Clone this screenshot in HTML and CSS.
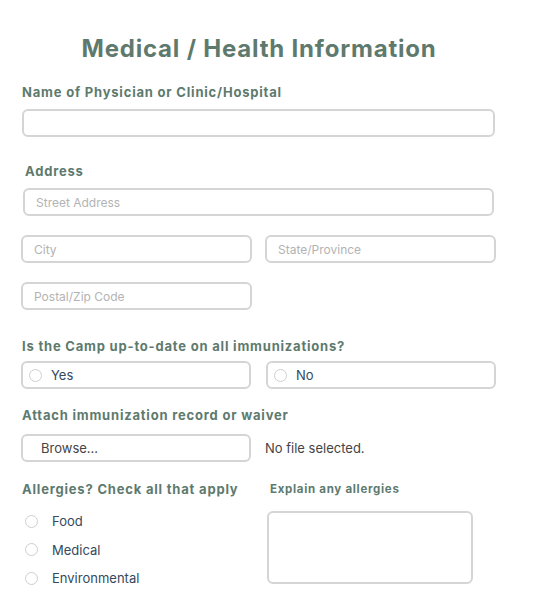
FILE: index.html
```html
<!DOCTYPE html>
<html lang="en">

<head>
    <meta charset="UTF-8">
    <meta name="viewport" content="width=device-width, initial-scale=1.0">
    <title>Medical / Health Information</title>
    <link rel="stylesheet" href="styles.css">
</head>

<body>
    <form class="health-form">
        <h1 class="form-title">Medical / Health Information</h1>

        <div class="form-group">
            <label class="form-label">Name of Physician or Clinic/Hospital</label>
            <input type="text" class="form-input wide">
        </div>

        <div class="form-group address">
            <label class="form-label indent">Address</label>
            <input type="text" class="form-input street" placeholder="Street Address">
            <div class="form-row">
                <input type="text" class="form-input" placeholder="City">
                <input type="text" class="form-input" placeholder="State/Province">
            </div>
            <div class="form-row">
                <input type="text" class="form-input" placeholder="Postal/Zip Code">
            </div>
        </div>

        <div class="form-group immunize">
            <label class="form-label">Is the Camp up-to-date on all immunizations?</label>
            <div class="form-row">
                <label class="choice-box"><span class="radio"></span>Yes</label>
                <label class="choice-box"><span class="radio"></span>No</label>
            </div>
        </div>

        <div class="form-group attach">
            <label class="form-label">Attach immunization record or waiver</label>
            <div class="file-row">
                <span class="browse-btn">Browse...</span>
                <span class="file-name">No file selected.</span>
            </div>
        </div>

        <div class="allergy-row">
            <div class="allergy-list">
                <label class="form-label">Allergies? Check all that apply</label>
                <label class="check-item"><span class="radio"></span>Food</label>
                <label class="check-item"><span class="radio"></span>Medical</label>
                <label class="check-item"><span class="radio"></span>Environmental</label>
            </div>
            <div class="allergy-explain">
                <label class="form-label small">Explain any allergies</label>
                <textarea class="form-textarea"></textarea>
            </div>
        </div>
    </form>
</body>
</html>
```

FILE: styles.css
```css
body {
    margin: 0;
    background: #ffffff;
    font-family: Inter, "Noto Sans", sans-serif;
}

.health-form {
    width: 476px;
    padding: 34px 0 0 21px;
}

.form-title {
    margin: 0 0 20px 0;
    text-align: center;
    color: #5e7a6e;
    font-size: 24px;
    line-height: 30px;
    letter-spacing: 0.8px;
    font-weight: 700;
}

.form-label {
    display: block;
    color: #5e7a6e;
    font-size: 13px;
    line-height: 16px;
    font-weight: 700;
    letter-spacing: 0.8px;
    margin: 0 0 9px 1px;
}

.form-label.indent {
    margin-left: 4px;
}

.form-label.small {
    font-size: 11.5px;
    letter-spacing: 0.7px;
    margin-left: 3px;
}

.form-group {
    margin-bottom: 26px;
}

.form-input,
.choice-box,
.browse-btn,
.form-textarea {
    box-sizing: border-box;
    height: 28px;
    border: 2px solid #d5d5d5;
    border-radius: 6px;
    background: #fff;
    outline: none;
    font-family: Inter, "Noto Sans", sans-serif;
}

.form-input {
    display: block;
    width: 231px;
    padding: 0 11px;
    font-size: 12px;
    color: #333;
}

.form-input::placeholder {
    color: #b3b3b3;
}

.form-input.wide {
    width: 473px;
    margin-left: 1px;
}

.form-input.street {
    width: 471px;
    margin-left: 2px;
}

.form-row {
    display: flex;
    gap: 13px;
    margin-top: 19px;
}

.form-group.address {
    margin-bottom: 28px;
}

.immunize .form-label {
    margin-bottom: 7px;
}

.immunize .form-row {
    margin-top: 0;
    gap: 15px;
}

.choice-box {
    display: flex;
    align-items: center;
    width: 230px;
    padding-left: 6px;
    font-size: 13px;
    color: #34495e;
}

.radio {
    display: inline-block;
    box-sizing: border-box;
    width: 13px;
    height: 13px;
    border: 1.5px solid #cfcfcf;
    border-radius: 50%;
    margin-right: 9px;
    flex-shrink: 0;
}

.form-group.immunize {
    margin-bottom: 18px;
}

.file-row {
    display: flex;
    align-items: center;
    gap: 14px;
    margin-top: 11px;
}

.browse-btn {
    display: flex;
    align-items: center;
    width: 230px;
    padding-left: 18px;
    font-size: 13px;
    color: #444;
}

.file-name {
    font-size: 13px;
    color: #444;
}

.form-group.attach {
    margin-bottom: 19px;
}

.allergy-row {
    display: flex;
}

.allergy-list {
    width: 246px;
}

.allergy-list .form-label {
    margin-bottom: 10px;
}

.check-item {
    display: flex;
    align-items: center;
    height: 28.5px;
    padding-left: 4px;
    font-size: 13px;
    color: #34495e;
}

.check-item .radio {
    margin-right: 14px;
}

.form-textarea {
    display: block;
    width: 206px;
    height: 73px;
    resize: none;
    margin-top: 14px;
}
```
